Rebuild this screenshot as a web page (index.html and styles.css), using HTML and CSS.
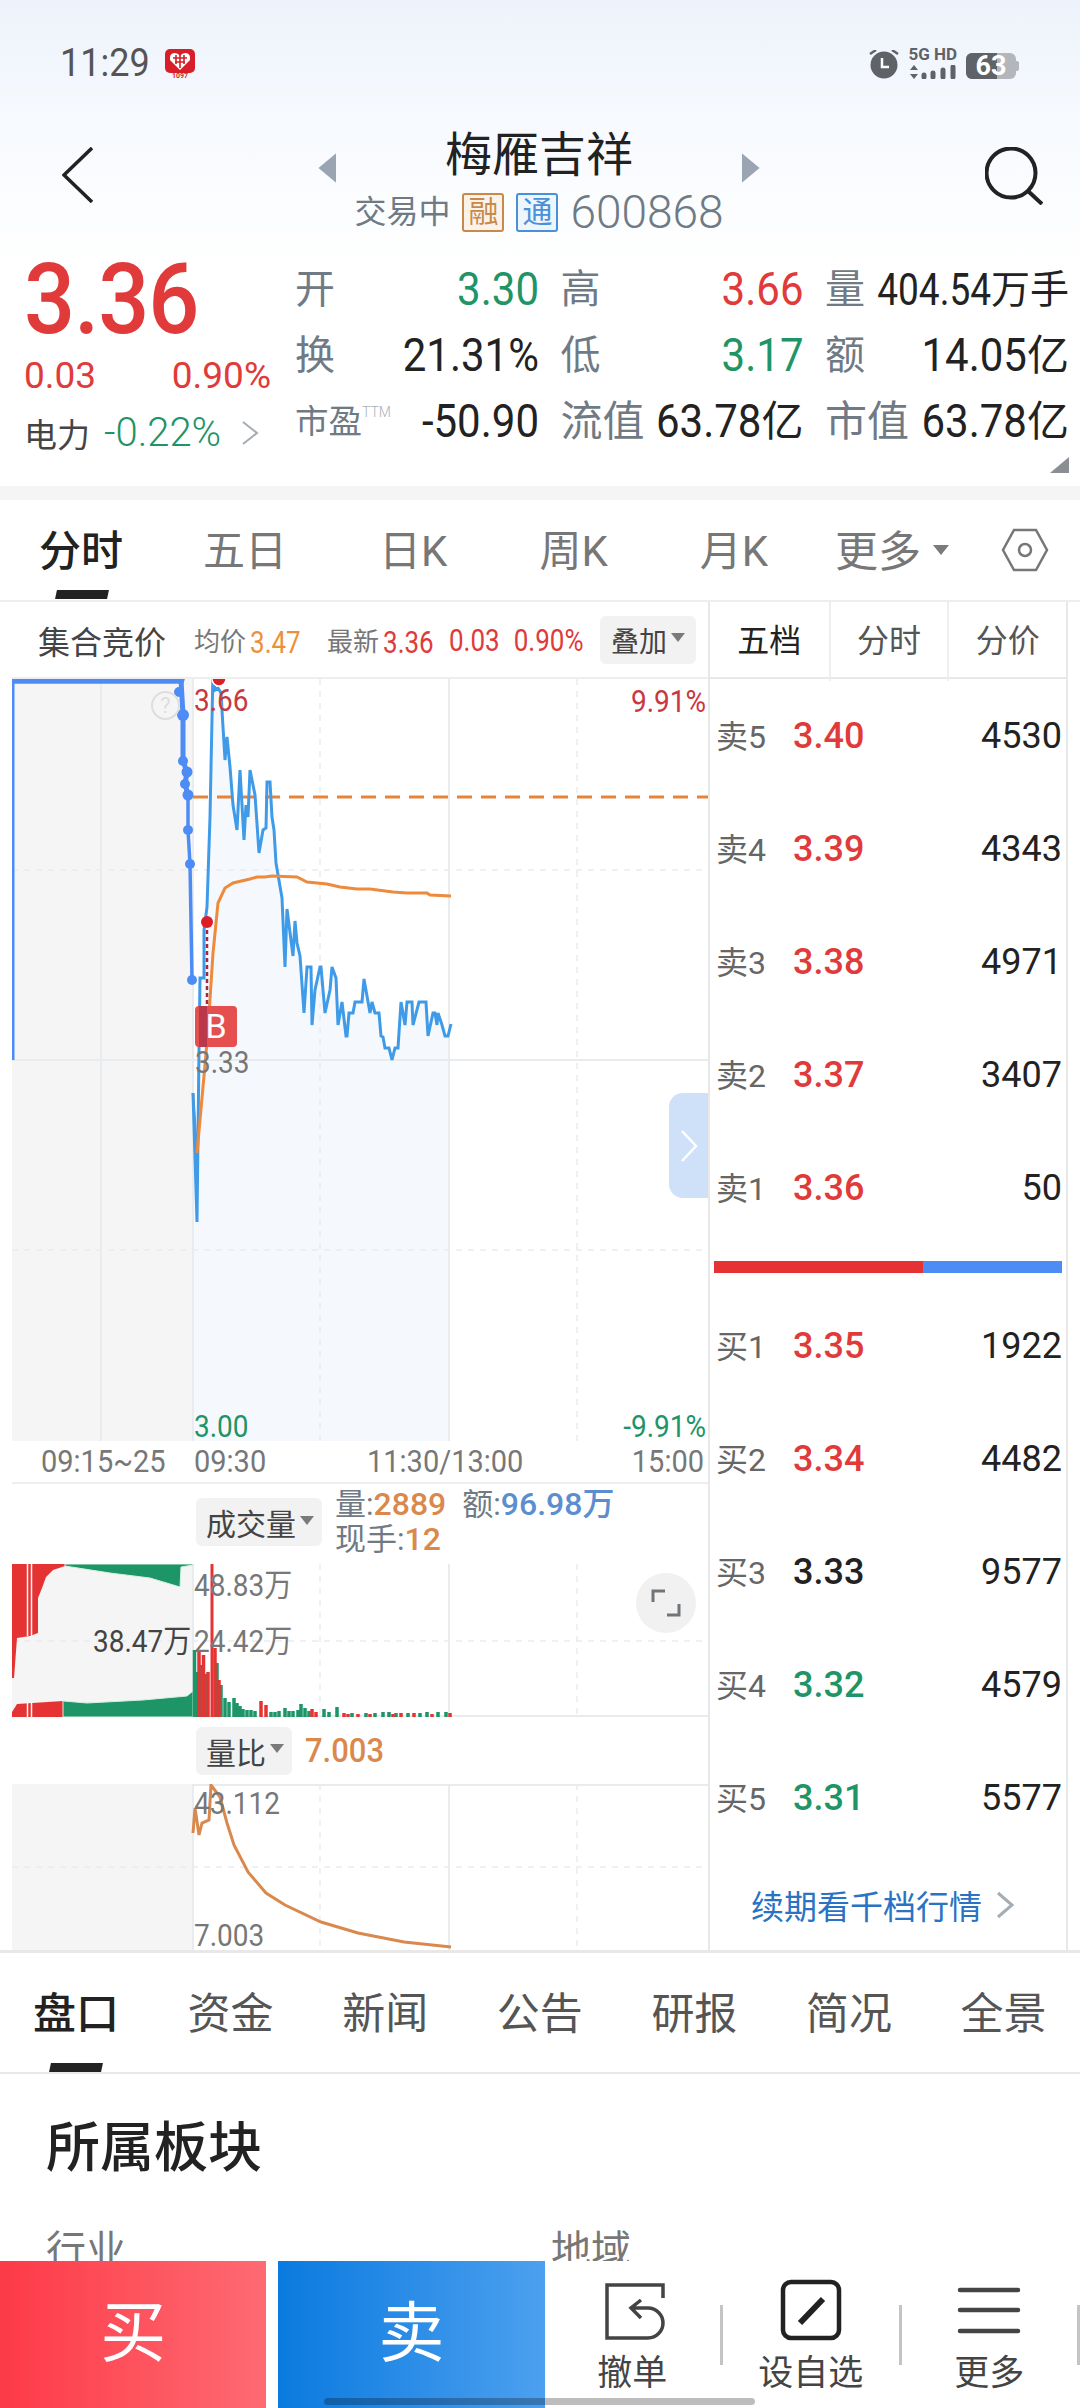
FILE: index.html
```html
<!DOCTYPE html>
<html lang="zh-CN">
<head>
    <meta charset="UTF-8">
    <meta name="viewport" content="width=device-width, initial-scale=1.0">
    <title>梅雁吉祥 600868</title>
    <link rel="stylesheet" href="styles.css">
</head>
<body>
<div class="page">
    <div class="head">
        <div class="status">
            <span class="clock">11:29</span>
            <svg class="app-icon" width="30" height="31" viewBox="0 0 30 31">
                <rect x="0" y="0" width="30" height="24" rx="5" fill="#d81e28"/>
                <path d="M15 21 L5 11 Q4 5 9 4 Q13 4 15 7 Q17 4 21 4 Q26 5 25 11 Z" fill="#fff"/>
                <path d="M8 9 H22 M10 13 H20 M15 5 V19 M11 6 V15 M19 6 V15" stroke="#d81e28" stroke-width="1.6"/>
                <text x="15" y="29" text-anchor="middle" font-size="7" font-weight="700" fill="#d81e28" font-family="Roboto">1097</text>
            </svg>
            <div class="status-right">
                <svg width="30" height="30" viewBox="870 50 30 30">
                    <circle cx="885" cy="65" r="13.5" fill="#5f6368"/>
                    <path d="M883 58 V67 H890" stroke="#fff" stroke-width="2.5" fill="none"/>
                    <path d="M871 54 L877 50 M893 50 L899 54" stroke="#5f6368" stroke-width="2.5"/>
                </svg>
                <div class="net">
                    <span class="net-text">5G HD</span>
                    <svg width="48" height="14" viewBox="909 65 48 14">
                        <path d="M914 65 L918 70 H910 Z M914 79 L910 74 H918 Z" fill="#5f6368"/>
                        <path d="M924 75 V77 M933 73 V77 M943 70 V77 M953 67 V77" stroke="#5f6368" stroke-width="5" stroke-linecap="round"/>
                    </svg>
                </div>
                <div class="battery"><span class="battery-fill"></span><span class="battery-num">63</span></div>
            </div>
        </div>
        <div class="nav">
            <svg width="31" height="56" viewBox="0 0 31 56"><path d="M30 1 L2 28 L30 55" fill="none" stroke="#222" stroke-width="3.5"/></svg>
            <div class="nav-center">
                <span class="tri tri-left"></span>
                <div class="stock">
                    <div class="stock-name">梅雁吉祥</div>
                    <div class="stock-sub">
                        <span>交易中</span>
                        <span class="tag tag-rong">融</span>
                        <span class="tag tag-tong">通</span>
                        <span class="stock-code">600868</span>
                    </div>
                </div>
                <span class="tri tri-right"></span>
            </div>
            <svg width="58" height="58" viewBox="985 146 58 58"><circle cx="1011" cy="172" r="24.5" fill="none" stroke="#222" stroke-width="4"/><path d="M1028 190 L1042 203" stroke="#222" stroke-width="4"/></svg>
        </div>
        <div class="quote">
            <div class="price-box">
                <div class="price"><span class="num">3.36</span></div>
                <div class="price-sub"><span>0.03</span><span>0.90%</span></div>
                <div class="power"><span>电力</span><span class="power-val">-0.22%</span>
                    <svg width="18" height="24" viewBox="0 0 18 24"><path d="M2 1 L16 12 L2 23" fill="none" stroke="#a5acb3" stroke-width="2"/></svg>
                </div>
            </div>
            <div class="stats">
                <div class="stat"><span class="lbl">开</span><span class="val green"><span class="num">3.30</span></span></div>
                <div class="stat"><span class="lbl">高</span><span class="val red"><span class="num">3.66</span></span></div>
                <div class="stat"><span class="lbl">量</span><span class="val val-narrow"><span class="num">404.54</span><span class="unit">万手</span></span></div>
                <div class="stat"><span class="lbl">换</span><span class="val"><span class="num">21.31%</span></span></div>
                <div class="stat"><span class="lbl">低</span><span class="val green"><span class="num">3.17</span></span></div>
                <div class="stat"><span class="lbl">额</span><span class="val"><span class="num">14.05</span><span class="unit">亿</span></span></div>
                <div class="stat"><span class="lbl lbl-small">市盈<sup class="ttm">TTM</sup></span><span class="val"><span class="num">-50.90</span></span></div>
                <div class="stat"><span class="lbl lbl-wide">流值</span><span class="val"><span class="num">63.78</span><span class="unit">亿</span></span></div>
                <div class="stat"><span class="lbl lbl-wide">市值</span><span class="val"><span class="num">63.78</span><span class="unit">亿</span></span></div>
            </div>
            <span class="corner"></span>
        </div>
    </div>
    <div class="band"></div>

    <div class="tabs">
        <span class="tab active">分时</span>
        <span class="tab">五日</span>
        <span class="tab">日K</span>
        <span class="tab">周K</span>
        <span class="tab">月K</span>
        <span class="tab tab-more">更多<span class="caret caret-big"></span></span>
        <svg class="hex" width="48" height="46" viewBox="0 0 48 46">
            <path d="M13 3 H35 L46 23 L35 43 H13 L2 23 Z" fill="none" stroke="#777" stroke-width="2.5"/>
            <circle cx="24" cy="23" r="6" fill="none" stroke="#777" stroke-width="2.5"/>
        </svg>
    </div>

    <div class="split">
        <div class="charts">
            <div class="chart-head">
                <span class="auction">集合竞价</span>
                <span class="legend legend-avg">均价<span class="orange"><span class="num-sm">3.47</span></span></span>
                <span class="legend legend-new">最新<span class="red"><span class="num-sm">3.36</span></span></span>
                <span class="legend legend-chg"><span class="num-sm">0.03</span></span>
                <span class="legend legend-chg"><span class="num-sm">0.90%</span></span>
                <span class="pick pick-overlay">叠加<span class="caret"></span></span>
            </div>

            <div class="chart chart-main">
                <svg width="696" height="762" viewBox="12 679 696 762">
                    <rect x="12" y="679" width="181" height="762" fill="#f5f5f5"/>
                    <path d="M193 1093 L197 1222 L199 1050 L200 978 L204 978 L204 930 L207 907 L210 817 L213 670 L215 690 L218 688 L221 693 L223 727 L225 760 L227 737 L230 767 L233 805 L237 830 L240 770 L244 840 L246 805 L248 817 L250 770 L255 795 L259 853 L263 830 L266 828 L267 782 L270 782 L272 817 L274 830 L276 863 L282 898 L285 967 L287 909 L293 956 L295 921 L297 943 L300 956 L304 1013 L307 967 L311 967 L312 1025 L315 990 L320 967 L321 967 L325 1013 L330 990 L332 967 L336 978 L338 1025 L342 1002 L346 1036 L347 1036 L349 1013 L353 1013 L355 1002 L362 1002 L364 979 L370 1013 L372 1002 L375 1013 L379 1013 L381 1036 L383 1037 L385 1048 L389 1048 L392 1060 L395 1048 L398 1048 L401 1002 L405 1025 L407 1002 L412 1002 L413 1025 L419 1002 L426 1002 L428 1036 L433 1013 L435 1013 L437 1025 L438 1013 L442 1025 L445 1036 L449 1036 L449 1441 L193 1441 Z" fill="#f5f9fe"/>
                    <path d="M12 870 H708 M12 1250 H708 M320 679 V1441 M577 679 V1441" stroke="#e9ecef" stroke-width="1.5" stroke-dasharray="6 6" fill="none"/>
                    <path d="M101 679 V1441 M193 679 V1441 M449 679 V1441 M12 1060 H708" stroke="#e9ecef" stroke-width="2" fill="none"/>
                    <path d="M193 797 H708" stroke="#e8833a" stroke-width="3" stroke-dasharray="15 9" fill="none"/>
                    <!-- auction line -->
                    <path d="M13 1060 V680 H183 L179 692" stroke="#4d8cf5" stroke-width="3" fill="none"/>
                    <path d="M12 681 H183" stroke="#4d8cf5" stroke-width="5.5" fill="none"/>
                    <path d="M181 680 L183 715 L183 761 L187 772 L185 784 L188 795" stroke="#4d8cf5" stroke-width="5" fill="none"/>
                    <path d="M188 795 L188 830 L190 864 L192 980" stroke="#4d8cf5" stroke-width="3.5" fill="none"/>
                    <g fill="#4d8cf5">
                        <circle cx="179" cy="692" r="5"/><circle cx="183" cy="715" r="6"/><circle cx="183" cy="761" r="5"/>
                        <circle cx="187" cy="772" r="5.5"/><circle cx="185" cy="784" r="5"/><circle cx="188" cy="795" r="5.5"/>
                        <circle cx="188" cy="830" r="5"/><circle cx="190" cy="864" r="5"/><circle cx="192" cy="980" r="5"/>
                    </g>
                    <path d="M193 1093 L197 1153" stroke="#8a8f96" stroke-width="2.5" fill="none"/>
                    <path d="M193 1093 L197 1222 L199 1050 L200 978 L204 978 L204 930 L207 907 L210 817 L213 670 L215 690 L218 688 L221 693 L223 727 L225 760 L227 737 L230 767 L233 805 L237 830 L240 770 L244 840 L246 805 L248 817 L250 770 L255 795 L259 853 L263 830 L266 828 L267 782 L270 782 L272 817 L274 830 L276 863 L282 898 L285 967 L287 909 L293 956 L295 921 L297 943 L300 956 L304 1013 L307 967 L311 967 L312 1025 L315 990 L320 967 L321 967 L325 1013 L330 990 L332 967 L336 978 L338 1025 L342 1002 L346 1036 L347 1036 L349 1013 L353 1013 L355 1002 L362 1002 L364 979 L370 1013 L372 1002 L375 1013 L379 1013 L381 1036 L383 1037 L385 1048 L389 1048 L392 1060 L395 1048 L398 1048 L401 1002 L405 1025 L407 1002 L412 1002 L413 1025 L419 1002 L426 1002 L428 1036 L433 1013 L435 1013 L437 1025 L438 1013 L442 1025 L445 1036 L448 1036 L451 1024" stroke="#3f9be8" stroke-width="3" fill="none"/>
                    <path d="M197 1153 L205 1065 L208 1030 L213 953 L218 903 L225 888 L233 883 L250 879 L257 877 L265 877 L272 876 L297 877 L307 882 L327 884 L340 887 L357 889 L370 889 L393 892 L407 893 L427 893 L430 895 L451 896" stroke="#ee8a3c" stroke-width="3" fill="none"/>
                    <path d="M207 930 V1006" stroke="#a8263c" stroke-width="2.5" stroke-dasharray="4 3" fill="none"/>
                    <circle cx="219" cy="679" r="7" fill="#dc1f26" stroke="#fff" stroke-width="1.5"/>
                    <circle cx="207" cy="922" r="6" fill="#dc1f26"/>
                </svg>
                <span class="help">?</span>
                <span class="mark-b">B</span>
                <span class="lab lab-high"><span class="num-lab">3.66</span></span>
                <span class="lab lab-upct"><span class="num-lab">9.91%</span></span>
                <span class="lab lab-mid"><span class="num-lab">3.33</span></span>
                <span class="lab lab-low"><span class="num-lab">3.00</span></span>
                <span class="lab lab-dpct"><span class="num-lab">-9.91%</span></span>
                <span class="drawer">
                    <svg width="18" height="32" viewBox="0 0 18 32"><path d="M2 1 L16 16 L2 31" fill="none" stroke="#fff" stroke-width="2.5"/></svg>
                </span>
            </div>

            <div class="axis">
                <span><span class="num-lab">09:15~25</span></span>
                <span><span class="num-lab">09:30</span></span>
                <span><span class="num-lab">11:30/13:00</span></span>
                <span><span class="num-lab">15:00</span></span>
            </div>

            <div class="sub-head sub-head-vol">
                <span class="pick">成交量<span class="caret"></span></span>
                <div class="vol-info">
                    <div><span class="key">量:</span><span class="orange2">2889</span><span class="key key-gap">额:</span><span class="blue2">96.98万</span></div>
                    <div><span class="key">现手:</span><span class="orange2">12</span></div>
                </div>
            </div>

            <div class="chart chart-vol">
                <svg width="696" height="153" viewBox="12 1564 696 153">
                    <rect x="12" y="1564" width="181" height="153" fill="#f5f5f5"/>
                    <path d="M12 1641 H708 M320 1564 V1717 M577 1564 V1717" stroke="#e9ecef" stroke-width="1.5" stroke-dasharray="6 6" fill="none"/>
                    <path d="M193 1564 V1717 M449 1564 V1717 M12 1716 H708" stroke="#e9ecef" stroke-width="2" fill="none"/>
                    <path d="M12 1564 V1678 H14 L17 1638 L30 1636 L38 1633 V1598 L42 1588 L46 1577 L53 1570 L65 1566 V1564 Z" fill="#e53333"/>
                    <path d="M65 1564 V1566 L110 1573 L150 1578 L180 1587 L181 1567 L193 1565 V1564 Z" fill="#1d9566" stroke="#d4f0e3"/>
                    <path d="M12 1717 V1712 L17 1704 L63 1701 V1717 Z" fill="#e53333"/>
                    <path d="M63 1717 V1701 L87 1703 L143 1700 L187 1696 L193 1691 V1717 Z" fill="#1d9566" stroke="#d4f0e3"/>
                    <path d="M27.5 1564 V1636 M31.5 1564 V1636 M27.5 1702 V1717 M31.5 1702 V1717" stroke="#f5f5f5" stroke-width="1.5"/>
                    <!-- bars after the open -->
                    <path d="M194.5 1717 V1650 M197 1717 V1672 M201 1717 V1665 M206 1717 V1674 M217 1717 V1663 M221 1717 V1685 M225 1717 V1698 M229 1717 V1702 M234 1717 V1698 M237 1717 V1703 M240 1717 V1706 M243 1717 V1709 M247 1717 V1710 M251 1717 V1710 M255 1717 V1711 M271 1717 V1712 M275 1717 V1712 M279 1717 V1711 M285 1717 V1708 M289 1717 V1711 M293 1717 V1711 M298 1717 V1710 M301 1717 V1704 M305 1717 V1708 M309 1717 V1711 M324 1717 V1709 M329 1717 V1712 M337 1717 V1707 M352 1717 V1713 M366 1717 V1713 M375 1717 V1713 M383 1717 V1712 M389 1717 V1712 M396 1717 V1713 M408 1717 V1713 M420 1717 V1713 M427 1717 V1712 M438 1717 V1712 M446 1717 V1712" stroke="#1d9566" stroke-width="3.5" fill="none"/>
                    <path d="M199 1717 V1652 M203.5 1717 V1655 M208 1717 V1672 M215 1717 V1648 M219 1717 V1680 M261 1717 V1701 M266 1717 V1705 M312 1717 V1709 M316 1717 V1712 M344 1717 V1713 M348 1717 V1714 M358 1717 V1714 M370 1717 V1714 M393 1717 V1714 M401 1717 V1713 M414 1717 V1713 M432 1717 V1714 M450 1717 V1713" stroke="#e53333" stroke-width="3.5" fill="none"/>
                    <path d="M212 1564 V1717" stroke="#e53333" stroke-width="3" fill="none"/>
                </svg>
                <span class="lab lab-vol1"><span class="num-lab">48.83万</span></span>
                <span class="lab lab-vol2"><span class="num-lab">24.42万</span></span>
                <span class="lab lab-vol3"><span class="num-lab">38.47万</span></span>
                <span class="expand">
                    <svg width="30" height="30" viewBox="0 0 30 30"><path d="M2 14 V3 H14 M28 16 V27 H16" fill="none" stroke="#70757a" stroke-width="3"/></svg>
                </span>
            </div>

            <div class="sub-head sub-head-ratio">
                <span class="pick">量比<span class="caret"></span></span>
                <span class="ratio-val"><span class="num">7.003</span></span>
            </div>

            <div class="chart chart-ratio">
                <svg width="696" height="166" viewBox="12 1784 696 166">
                    <rect x="12" y="1784" width="181" height="166" fill="#f5f5f5"/>
                    <path d="M12 1867 H708 M320 1784 V1950 M577 1784 V1950" stroke="#e9ecef" stroke-width="1.5" stroke-dasharray="6 6" fill="none"/>
                    <path d="M193 1784 V1950 M449 1784 V1950 M193 1785 H708" stroke="#e9ecef" stroke-width="2" fill="none"/>
                    <path d="M193 1833 L195 1808 L199 1835 L202 1823 L209 1820 L211 1785 L220 1797 L227 1823 L234 1845 L248 1872 L266 1893 L285 1905 L321 1922 L358 1933 L404 1942 L451 1947" stroke="#d9894d" stroke-width="3" fill="none"/>
                </svg>
                <span class="lab lab-r1"><span class="num-lab">43.112</span></span>
                <span class="lab lab-r2"><span class="num-lab">7.003</span></span>
            </div>
        </div>

        <div class="depth">
            <div class="depth-tabs">
                <span class="depth-tab active">五档</span>
                <span class="depth-tab">分时</span>
                <span class="depth-tab">分价</span>
            </div>
            <div class="row"><span class="row-name">卖5</span><span class="row-price red">3.40</span><span class="row-vol">4530</span></div>
            <div class="row"><span class="row-name">卖4</span><span class="row-price red">3.39</span><span class="row-vol">4343</span></div>
            <div class="row"><span class="row-name">卖3</span><span class="row-price red">3.38</span><span class="row-vol">4971</span></div>
            <div class="row"><span class="row-name">卖2</span><span class="row-price red">3.37</span><span class="row-vol">3407</span></div>
            <div class="row"><span class="row-name">卖1</span><span class="row-price red">3.36</span><span class="row-vol">50</span></div>
            <div class="ratio-bar"><span class="ratio-red"></span><span class="ratio-blue"></span></div>
            <div class="row"><span class="row-name">买1</span><span class="row-price red">3.35</span><span class="row-vol">1922</span></div>
            <div class="row"><span class="row-name">买2</span><span class="row-price red">3.34</span><span class="row-vol">4482</span></div>
            <div class="row"><span class="row-name">买3</span><span class="row-price">3.33</span><span class="row-vol">9577</span></div>
            <div class="row"><span class="row-name">买4</span><span class="row-price green">3.32</span><span class="row-vol">4579</span></div>
            <div class="row"><span class="row-name">买5</span><span class="row-price green">3.31</span><span class="row-vol">5577</span></div>
            <div class="more-link">续期看千档行情
                <svg width="18" height="28" viewBox="0 0 18 28"><path d="M2 2 L16 14 L2 26" fill="none" stroke="#a5acb3" stroke-width="3"/></svg>
            </div>
        </div>
    </div>

    <div class="info-tabs">
        <span class="info-tab active">盘口</span>
        <span class="info-tab">资金</span>
        <span class="info-tab">新闻</span>
        <span class="info-tab">公告</span>
        <span class="info-tab">研报</span>
        <span class="info-tab">简况</span>
        <span class="info-tab">全景</span>
    </div>

    <div class="plates">
        <h2>所属板块</h2>
        <div class="plate-cols"><span>行业</span><span>地域</span></div>
    </div>

    <div class="trade-bar">
        <div class="trade trade-buy">买</div>
        <div class="trade trade-sell">卖</div>
        <div class="tool">
            <svg width="65" height="64" viewBox="602 2279 65 64"><path d="M665 2298 V2285 H609 V2338 H650 A15 15 0 0 0 650 2308 H633 M643 2300 L633 2308 L643 2318" fill="none" stroke="#444" stroke-width="3.5"/></svg>
            <span>撤单</span>
        </div>
        <span class="sep"></span>
        <div class="tool">
            <svg width="64" height="64" viewBox="781 2279 64 64"><rect x="785" y="2282" width="56" height="56" rx="8" fill="none" stroke="#222" stroke-width="4.5"/><path d="M802 2323 L825 2299" stroke="#222" stroke-width="6"/></svg>
            <span>设自选</span>
        </div>
        <span class="sep"></span>
        <div class="tool">
            <svg width="64" height="64" viewBox="960 2279 64 64"><path d="M963 2290 H1021 M963 2310 H1021 M963 2331 H1021" stroke="#444" stroke-width="4.5" stroke-linecap="round"/></svg>
            <span>更多</span>
        </div>
        <span class="sep"></span>
    </div>
    <span class="home-bar"></span>
</div>
</body>
</html>
```

FILE: styles.css
```css
* {
    box-sizing: border-box;
}

body {
    margin: 0;
    font-family: Roboto, "Noto Sans CJK SC", sans-serif;
    background-color: #fff;
    color: #222;
}

.page {
    position: relative;
    width: 1080px;
    height: 2408px;
    overflow: hidden;
}

/* tall narrow digits of the app font */
.num, .num-sm, .num-lab {
    display: inline-block;
}
.num { transform: scaleY(1.1); }
.num-sm { transform: scaleY(1.2); }
.num-lab { transform: scaleY(1.12); }

/* header */
.head {
    height: 486px;
    background: linear-gradient(#edf3fb 0, #f6f9fe 110px, #fff 270px);
}

.status {
    display: flex;
    align-items: flex-start;
    height: 126px;
    padding: 44px 61px 0 60px;
}

.clock {
    font-size: 36px;
    line-height: 38px;
    color: #555;
    transform: scaleY(1.08);
}

.app-icon {
    margin: 5px 0 0 15px;
}

.status-right {
    display: flex;
    align-items: flex-start;
    gap: 9px;
    margin: 6px 0 0 auto;
}

.net {
    display: flex;
    flex-direction: column;
    align-items: center;
    margin-top: -4px;
}

.net-text {
    font-size: 17px;
    font-weight: 700;
    line-height: 17px;
    margin-bottom: 2px;
    color: #5f6368;
    white-space: nowrap;
}

.battery {
    position: relative;
    display: flex;
    justify-content: center;
    align-items: center;
    width: 50px;
    height: 26px;
    margin: 3px 3px 0 0;
    border-radius: 6px;
    background-color: #b3b6ba;
}

.battery::after {
    content: "";
    position: absolute;
    right: -3px;
    top: 8px;
    width: 3px;
    height: 10px;
    border-radius: 0 2px 2px 0;
    background-color: #b3b6ba;
}

.battery-fill {
    position: absolute;
    left: 0;
    top: 0;
    width: 31px;
    height: 26px;
    border-radius: 6px 0 0 6px;
    background-color: #5f6368;
}

.battery-num {
    position: relative;
    font-size: 27px;
    font-weight: 700;
    color: #fff;
}

.nav {
    display: flex;
    justify-content: space-between;
    align-items: flex-start;
    height: 114px;
    padding: 1px 37px 0 62px;
}

.nav > svg {
    margin-top: 20px;
}

.nav-center {
    display: flex;
    align-items: flex-start;
    gap: 18px;
}

.tri {
    width: 18px;
    height: 30px;
    margin-top: 26px;
    background-color: #9aa5b1;
}
.tri-left { clip-path: polygon(100% 0, 100% 100%, 0 50%); }
.tri-right { clip-path: polygon(0 0, 100% 50%, 0 100%); }

.stock {
    display: flex;
    flex-direction: column;
    align-items: center;
}

.stock-name {
    font-size: 47px;
    line-height: 56px;
    color: #222;
}

.stock-sub {
    display: flex;
    align-items: center;
    gap: 12px;
    margin-top: 10px;
    font-size: 32px;
    line-height: 39px;
    color: #6f7a85;
}

.tag {
    width: 42px;
    height: 39px;
    border-radius: 3px;
    border: 2px solid;
    font-size: 30px;
    line-height: 33px;
    text-align: center;
}
.tag-rong { color: #c9894a; background-color: #fbf3ea; }
.tag-tong { color: #4a90d9; background-color: #edf5fd; }

.stock-code {
    font-size: 46px;
    font-weight: 300;
    color: #6f7a85;
}

.quote {
    position: relative;
    display: flex;
    height: 246px;
    padding: 17px 11px 0 24px;
}

.price-box {
    width: 271px;
    flex: none;
    color: #e03a3a;
}

.price {
    height: 88px;
    padding-top: 1px;
    font-size: 90px;
    font-weight: 500;
    line-height: 86px;
    letter-spacing: -1px;
}

.price .num { transform: scaleY(1.1); transform-origin: 50% 60%; }

.price-sub {
    display: flex;
    justify-content: space-between;
    align-items: center;
    width: 247px;
    height: 60px;
    font-size: 37px;
}

.power {
    display: flex;
    align-items: center;
    height: 55px;
    font-size: 33px;
    color: #444;
}

.power-val {
    margin-left: 14px;
    font-size: 40px;
    font-weight: 300;
    color: #1f9467;
}

.power svg {
    margin-left: 20px;
}

.stats {
    display: grid;
    grid-template-columns: 244px 243px 244px;
    grid-auto-rows: 66px;
    column-gap: 21.5px;
    width: 773px;
}

.stat {
    display: flex;
    justify-content: space-between;
    align-items: center;
}

.lbl {
    font-size: 40px;
    line-height: 44px;
    color: #6f7a85;
    white-space: nowrap;
}

.lbl-small {
    font-size: 33.5px;
}

.lbl-wide {
    font-size: 42px;
}

.ttm {
    font-size: 14px;
    font-weight: 300;
    vertical-align: 16px;
    line-height: 0;
    color: #a9b0b7;
}

.val {
    font-size: 42px;
    line-height: 44px;
    white-space: nowrap;
}

.val-narrow .num {
    font-size: 37px;
    transform: scaleY(1.2);
}

.unit {
    font-size: 42px;
}

.val-narrow .unit {
    font-size: 39px;
}

.corner {
    position: absolute;
    right: 11px;
    top: 217px;
    width: 19px;
    height: 16px;
    background-color: #8a8f96;
    clip-path: polygon(100% 0, 100% 100%, 0 100%);
}

.band {
    height: 14px;
    background-color: #f5f5f5;
}

/* period tabs */
.tabs {
    position: relative;
    display: flex;
    align-items: center;
    gap: 92px;
    height: 102px;
    padding: 4px 0 0 39px;
    border-bottom: 2px solid #eee;
}

.tab {
    font-size: 42px;
    line-height: 50px;
    color: #777;
    white-space: nowrap;
}

.tab.active {
    position: relative;
    margin-right: -12px;
    font-weight: 500;
    color: #222;
}

.tab.active::after {
    content: "";
    position: absolute;
    left: 17px;
    top: 63px;
    width: 52px;
    height: 9px;
    background-color: #222;
    transform: skewX(-12deg);
}

.tab-more {
    display: flex;
    align-items: center;
    margin-left: -25px;
    font-size: 43px;
}

.caret {
    width: 0;
    height: 0;
    margin: 0 0 4px 4px;
    border-left: 7px solid transparent;
    border-right: 7px solid transparent;
    border-top: 9px solid #7a7a7a;
}

.caret-big {
    margin-left: 12px;
    border-left-width: 8px;
    border-right-width: 8px;
    border-top-width: 10px;
}

.hex {
    flex: none;
    position: absolute;
    left: 1001px;
    top: 27px;
}

/* chart column + order book */
.split {
    display: flex;
    height: 1348px;
    padding-left: 12px;
}

.charts {
    width: 696px;
    flex: none;
}

.chart-head {
    display: flex;
    align-items: center;
    height: 77px;
    padding-left: 26px;
    border-bottom: 2px solid #eee;
}

.auction {
    width: 156px;
    font-size: 32px;
    color: #444;
}

.legend {
    font-size: 26px;
    color: #777;
    white-space: nowrap;
}

.legend-avg { width: 133px; }
.legend-new { width: 122px; }
.legend-chg { margin-right: 14px; color: #e03a3a; }

.legend-new .red,
.legend-avg .orange {
    margin-left: 4px;
}

.pick {
    display: inline-flex;
    align-items: center;
    height: 48px;
    padding: 0 8px 0 10px;
    border-radius: 6px;
    background-color: #f2f2f2;
    font-size: 30px;
    color: #444;
    white-space: nowrap;
}

.pick-overlay {
    margin-left: auto;
    margin-right: 12px;
    padding: 0 11px;
    font-size: 28px;
}

.chart {
    position: relative;
}

.chart svg {
    display: block;
}

.chart-main { height: 762px; }
.chart-vol { height: 153px; }
.chart-ratio { height: 166px; }

.lab {
    position: absolute;
    font-size: 28px;
    line-height: 32px;
    color: #777;
    white-space: nowrap;
}

.lab-high { left: 182px; top: 6px; color: #c9383f; }
.lab-upct { right: 2px; top: 7px; color: #c9383f; }
.lab-mid { left: 183px; top: 368px; }
.lab-low { left: 182px; top: 732px; color: #1f9467; }
.lab-dpct { right: 2px; top: 732px; color: #1f9467; }
.lab-vol1 { left: 182px; top: 6px; }
.lab-vol2 { left: 182px; top: 62px; }
.lab-vol3 { left: 81px; top: 62px; color: #444; }
.lab-r1 { left: 182px; top: 4px; }
.lab-r2 { left: 182px; top: 136px; }

.help {
    position: absolute;
    left: 139px;
    top: 12px;
    width: 29px;
    height: 29px;
    border: 2px solid #dedede;
    border-radius: 50%;
    font-size: 22px;
    line-height: 25px;
    text-align: center;
    color: #dedede;
}

.mark-b {
    position: absolute;
    left: 183px;
    top: 327px;
    width: 42px;
    height: 41px;
    border-radius: 4px;
    background-color: #e64f4f;
    font-size: 34px;
    line-height: 41px;
    text-align: center;
    color: #fff;
}

.mark-b::before {
    content: "";
    position: absolute;
    left: 4px;
    top: 0;
    width: 8px;
    height: 41px;
    background-color: rgba(130, 30, 70, 0.45);
}

.drawer {
    position: absolute;
    right: 0;
    top: 414px;
    display: flex;
    justify-content: center;
    align-items: center;
    width: 39px;
    height: 105px;
    border-radius: 14px 0 0 14px;
    background-color: #cfe1f8;
}

.axis {
    display: grid;
    grid-template-columns: 153px 173px 1fr auto;
    align-items: center;
    height: 43px;
    padding: 0 4px 2px 29px;
    border-bottom: 2px solid #eee;
    font-size: 29px;
    color: #777;
    white-space: nowrap;
}

.axis .num-lab {
    transform: scaleY(1.08);
}

.sub-head {
    display: flex;
    align-items: center;
    padding-left: 184px;
}

.sub-head-vol { height: 80px; padding-bottom: 4px; }
.sub-head-ratio { height: 67px; }

.vol-info {
    margin-left: 13px;
    font-size: 31px;
    line-height: 34px;
    white-space: nowrap;
}

.vol-info .orange2,
.vol-info .blue2 {
    font-size: 32px;
    font-weight: 500;
}

.key {
    color: #6f7a85;
}

.key-gap {
    margin-left: 16px;
}

.expand {
    position: absolute;
    right: 12px;
    top: 9px;
    display: flex;
    justify-content: center;
    align-items: center;
    width: 60px;
    height: 60px;
    border-radius: 50%;
    background-color: #f1f1f1;
}

.ratio-val {
    margin-left: 13px;
    font-size: 31px;
    font-weight: 500;
    color: #d9894d;
}

.depth {
    width: 360px;
    flex: none;
    border-left: 2px solid #e8e8e8;
    border-right: 2px solid #e8e8e8;
}

.depth-tabs {
    display: grid;
    grid-template-columns: repeat(3, 1fr);
    height: 77px;
    border-bottom: 2px solid #e8e8e8;
}

.depth-tab {
    font-size: 32px;
    line-height: 79px;
    text-align: center;
    color: #555;
}

.depth-tab + .depth-tab {
    border-left: 2px solid #eee;
}

.depth-tab.active {
    color: #222;
}

.row {
    display: flex;
    align-items: center;
    height: 113px;
    padding: 0 4px 0 6px;
}

.row-name {
    width: 77px;
    margin-top: -3px;
    font-size: 32px;
    color: #666;
}

.row-price {
    font-size: 36px;
    font-weight: 500;
}

.row-vol {
    margin-left: auto;
    font-size: 36px;
    color: #222;
}

.ratio-bar {
    display: flex;
    height: 12px;
    margin: 17px 4px 16px;
}

.ratio-red {
    width: 209px;
    background-color: #e53333;
}

.ratio-blue {
    flex: 1;
    background-color: #4d8cf5;
}

.more-link {
    display: flex;
    align-items: center;
    height: 94px;
    padding: 8px 0 0 41px;
    font-size: 33px;
    color: #2a72c4;
}

.more-link svg {
    margin-left: 14px;
}

/* lower tabs */
.info-tabs {
    display: flex;
    gap: 68.6px;
    height: 124px;
    padding: 36px 0 0 33px;
    border-top: 3px solid #e8e8e8;
    border-bottom: 2px solid #e8e8e8;
}

.info-tab {
    position: relative;
    height: 50px;
    font-size: 43px;
    line-height: 50px;
    color: #555;
}

.info-tab.active {
    font-weight: 500;
    color: #222;
}

.info-tab.active::after {
    content: "";
    position: absolute;
    left: 17px;
    top: 74px;
    width: 52px;
    height: 9px;
    background-color: #222;
    transform: skewX(-12deg);
}

.plates {
    height: 187px;
    padding: 39px 0 0 46px;
    overflow: hidden;
}

.plates h2 {
    margin: 0;
    font-size: 54px;
    font-weight: 500;
    line-height: 72px;
    color: #222;
}

.plate-cols {
    display: grid;
    grid-template-columns: 505px 1fr;
    margin-top: 41px;
    font-size: 40px;
    line-height: 50px;
    color: #777;
}

/* bottom trade bar */
.trade-bar {
    display: flex;
    height: 147px;
}

.trade {
    width: 267px;
    padding-top: 30px;
    font-size: 66px;
    line-height: 86px;
    text-align: center;
    color: #fff;
}

.trade-buy {
    background: linear-gradient(90deg, #fd3a47, #fe6a73);
}

.trade-sell {
    margin-left: 12px;
    background: linear-gradient(90deg, #0a7adf, #4da0ef);
}

.tool {
    display: flex;
    flex-direction: column;
    align-items: center;
    width: 176px;
    padding-top: 18px;
    font-size: 35px;
    line-height: 42px;
    color: #444;
}

.tool svg {
    margin-bottom: 10px;
}

.sep {
    width: 3px;
    height: 60px;
    margin-top: 44px;
    flex: none;
    background-color: #c4c4c4;
}

.home-bar {
    position: absolute;
    left: 324px;
    top: 2398px;
    width: 431px;
    height: 7px;
    border-radius: 4px;
    background-color: rgba(0, 0, 0, 0.26);
}

.red { color: #e03a3a; }
.green { color: #1f9467; }
.orange { color: #ee8f3c; }
.orange2 { color: #d9894d; }
.blue2 { color: #5b8dcf; }
```
